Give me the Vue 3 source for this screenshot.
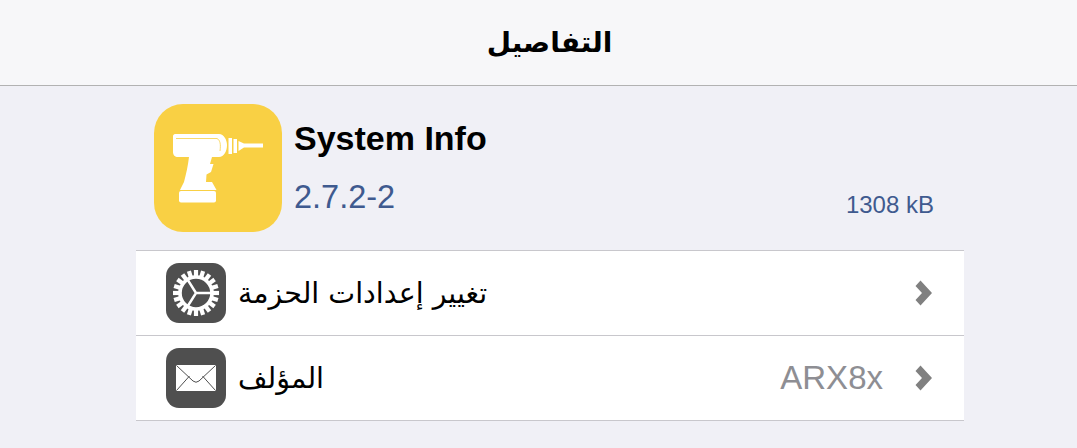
<template>
  <div class="page">
    <header class="nav-bar">
      <h1 class="nav-title">التفاصيل</h1>
    </header>
    <main class="content">
      <section class="package">
        <svg class="app-icon" viewBox="0 0 128 128" aria-hidden="true">
          <rect width="128" height="128" rx="29" fill="#f9d044" />
          <path
            fill="#fff"
            d="M21 30 H65 C70 30 73 36 73 41 C73 47 70 53 65 53 H58 L56 60 H59.5 L57 68 L52.5 70.5 L52 78 H58 L62.5 86 H26 L30 78 C32 70 34 62 35 53 H24 C21 53 19 51 19 48 V32 C19 31 20 30 21 30 Z"
          />
          <path
            fill="#fff"
            d="M74.5 34 H78 V50 H74.5 Z M79.5 35 H83 V49 H79.5 Z M84.5 37 L90 39.5 H109 V43.5 H90 L84.5 47 Z"
          />
          <rect x="25" y="87" width="37" height="11.5" rx="2" fill="#fff" />
          <path d="M22 34.5 H63 C66 36 67 40 66 47" fill="none" stroke="#f9d044" stroke-width="0.8" />
        </svg>
        <div class="package-info">
          <div class="package-name">System Info</div>
          <div class="package-version">2.7.2-2</div>
        </div>
        <div class="package-size">1308 kB</div>
      </section>

      <ul class="table">
        <li v-for="row in rows" :key="row.title" class="table-row">
          <svg class="row-icon" viewBox="0 0 60 60" aria-hidden="true">
            <rect width="60" height="60" rx="13" fill="#4f4f4f" />
            <template v-if="row.icon === 'gear'">
              <g fill="#fff">
                <rect
                  v-for="angle in teeth"
                  :key="angle"
                  x="27.9"
                  y="7"
                  width="4.2"
                  height="7"
                  :transform="`rotate(${angle} 30 30)`"
                />
              </g>
              <circle cx="30" cy="30" r="16" fill="none" stroke="#fff" stroke-width="3.6" />
              <path d="M30 30 L46 30 M30 30 L21.5 16.5 M30 30 L21.5 43.5" stroke="#fff" stroke-width="2.4" fill="none" />
            </template>
            <template v-else>
              <rect x="10" y="17" width="40" height="26" rx="1" fill="#fff" />
              <path
                d="M10.5 17.5 L27 33 Q30 35.5 33 33 L49.5 17.5 M10.5 42.5 L23.5 28 M49.5 42.5 L36.5 28"
                fill="none"
                stroke="#4f4f4f"
                stroke-width="1"
              />
            </template>
          </svg>
          <span class="row-title">{{ row.title }}</span>
          <span v-if="row.value" class="row-value">{{ row.value }}</span>
          <svg class="chevron" viewBox="0 0 18 26" aria-hidden="true">
            <path d="M0.5 6 L5.5 0.5 L17 13 L5.5 25.5 L0.5 20 L7 13 Z" fill="#808080" />
          </svg>
        </li>
      </ul>
    </main>
  </div>
</template>

<script setup>
const rows = [
  { title: "تغيير إعدادات الحزمة", icon: "gear", value: "" },
  { title: "المؤلف", icon: "mail", value: "ARX8x" },
];

// 20 teeth round the settings gear.
const teeth = Array.from({ length: 20 }, (_, i) => i * 18);
</script>

<style>
html,
body {
  margin: 0;
  background: #f0f0f6;
}
</style>

<style scoped>
.page {
  width: 1077px;
  height: 448px;
  overflow: hidden;
  background: #f0f0f6;
  font-family: "Liberation Sans", Arial, sans-serif;
}
.nav-bar {
  height: 86px;
  box-sizing: border-box;
  display: flex;
  align-items: center;
  justify-content: center;
  padding-left: 22px;
  background: #f7f7f9;
  border-bottom: 1px solid #b2b2b2;
}
.nav-title {
  margin: 0;
  font-family: "DejaVu Sans", sans-serif;
  font-size: 28px;
  font-weight: 700;
  color: #000;
}
.content {
  width: 828px;
  margin-left: 136px;
}
.package {
  height: 164px;
  padding: 18px 30px 0 18px;
  box-sizing: border-box;
  display: flex;
  align-items: flex-start;
}
.app-icon {
  width: 128px;
  height: 128px;
  flex-shrink: 0;
}
.package-info {
  margin-left: 12px;
  flex: 1;
}
.package-name {
  margin-top: 15px;
  font-size: 34px;
  line-height: 38px;
  font-weight: 700;
  color: #000;
}
.package-version {
  margin-top: 22px;
  font-size: 32.5px;
  line-height: 36px;
  color: #3f5a8f;
}
.package-size {
  margin-top: 87px;
  font-size: 24px;
  line-height: 28px;
  color: #3f5a8f;
}
.table {
  list-style: none;
  margin: 0;
  padding: 0;
  background: #fff;
  border-top: 1px solid #c8c7cc;
}
.table-row {
  height: 85px;
  box-sizing: border-box;
  display: flex;
  align-items: center;
  padding: 0 31px 0 30px;
  border-bottom: 1px solid #c8c7cc;
}
.row-icon {
  width: 60px;
  height: 60px;
  flex-shrink: 0;
}
.row-title {
  margin-left: 12px;
  flex: 1;
  font-family: "DejaVu Sans", sans-serif;
  font-size: 28.5px;
  color: #000;
}
.row-value {
  font-size: 33px;
  color: #8e8e93;
  margin-right: 32px;
}
.chevron {
  width: 18px;
  height: 26px;
  flex-shrink: 0;
}
</style>
